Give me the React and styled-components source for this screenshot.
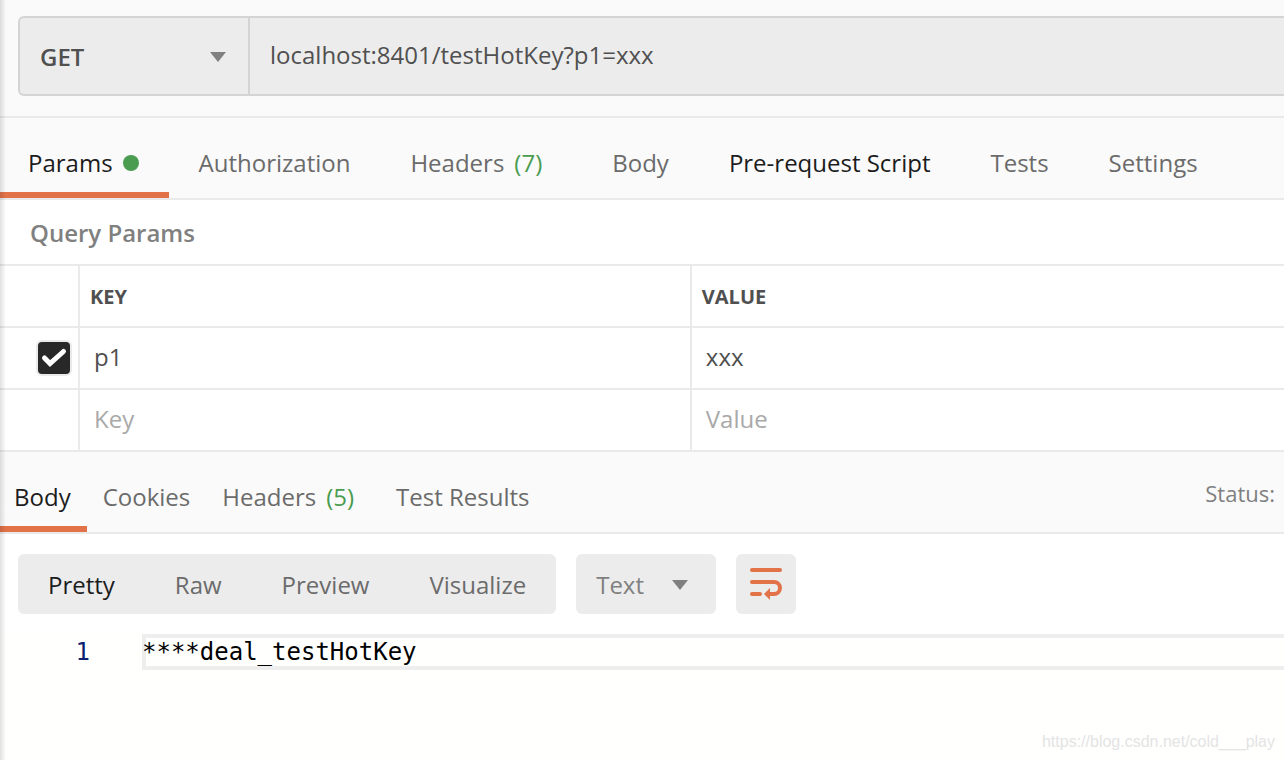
import React, { useState } from 'react';
import styled, { createGlobalStyle } from 'styled-components';

const requestTabs = [
  { name: 'Params', dot: true },
  { name: 'Authorization' },
  { name: 'Headers', count: 7 },
  { name: 'Body' },
  { name: 'Pre-request Script', dark: true },
  { name: 'Tests' },
  { name: 'Settings' },
];

const responseTabs = [
  { name: 'Body' },
  { name: 'Cookies' },
  { name: 'Headers', count: 5 },
  { name: 'Test Results' },
];

const views = ['Pretty', 'Raw', 'Preview', 'Visualize'];

const Caret = () => (
  <CaretIcon width="16" height="10" viewBox="0 0 16 10" aria-hidden="true">
    <path d="M0 0h16L8 10z" fill="#808080" />
  </CaretIcon>
);

const WrapIcon = () => (
  <svg width="32" height="32" viewBox="0 0 32 32" fill="none" aria-hidden="true">
    <g stroke="#e27349" strokeWidth="4" strokeLinecap="round">
      <path d="M2 2h28" />
      <path d="M2 14h22a6 6 0 0 1 0 12h-5" />
      <path d="M2 26h8" />
    </g>
    <path d="M14 26l6-6v12z" fill="#e27349" />
  </svg>
);

const App = () => {
  const [method, setMethod] = useState('GET');
  const [url, setUrl] = useState('localhost:8401/testHotKey?p1=xxx');
  const [requestTab, setRequestTab] = useState('Params');
  const [responseTab, setResponseTab] = useState('Body');
  const [view, setView] = useState('Pretty');
  const [format, setFormat] = useState('Text');
  const [enabled, setEnabled] = useState(true);
  const [paramKey, setParamKey] = useState('p1');
  const [paramValue, setParamValue] = useState('xxx');

  return (
    <>
      <GlobalStyle />
      <Page>
        <RequestBar>
          <UrlGroup>
            <MethodBox>
              <MethodSelect
                aria-label="Method"
                value={method}
                onChange={(event) => setMethod(event.target.value)}
              >
                <option>GET</option>
                <option>POST</option>
                <option>PUT</option>
                <option>DELETE</option>
              </MethodSelect>
              <Caret />
            </MethodBox>
            <UrlInput
              type="text"
              aria-label="Request URL"
              value={url}
              onChange={(event) => setUrl(event.target.value)}
            />
          </UrlGroup>
        </RequestBar>

        <RequestTabs>
          {requestTabs.map((tab) => (
            <RequestTab
              key={tab.name}
              type="button"
              $active={tab.name === requestTab}
              $dark={tab.dark}
              $wide={Boolean(tab.count)}
              onClick={() => setRequestTab(tab.name)}
            >
              {tab.name}
              {tab.dot && <Dot />}
              {tab.count && <Count>({tab.count})</Count>}
            </RequestTab>
          ))}
        </RequestTabs>

        <SectionTitle>Query Params</SectionTitle>
        <ParamsTable>
          <colgroup>
            <CheckCol />
            <KeyCol />
            <col />
          </colgroup>
          <thead>
            <tr>
              <HeadCell aria-label="Enabled" />
              <HeadCell scope="col">KEY</HeadCell>
              <HeadCell scope="col">VALUE</HeadCell>
            </tr>
          </thead>
          <tbody>
            <tr>
              <Cell>
                <CheckBox
                  type="checkbox"
                  aria-label="Enable p1"
                  checked={enabled}
                  onChange={(event) => setEnabled(event.target.checked)}
                />
              </Cell>
              <Cell>
                <CellInput
                  type="text"
                  aria-label="Key"
                  value={paramKey}
                  onChange={(event) => setParamKey(event.target.value)}
                />
              </Cell>
              <Cell>
                <CellInput
                  type="text"
                  aria-label="Value"
                  value={paramValue}
                  onChange={(event) => setParamValue(event.target.value)}
                />
              </Cell>
            </tr>
            <tr>
              <Cell />
              <Cell>
                <CellInput type="text" aria-label="New key" placeholder="Key" />
              </Cell>
              <Cell>
                <CellInput type="text" aria-label="New value" placeholder="Value" />
              </Cell>
            </tr>
          </tbody>
        </ParamsTable>

        <ResponseBar>
          <ResponseTabs>
            {responseTabs.map((tab) => (
              <ResponseTab
                key={tab.name}
                type="button"
                $active={tab.name === responseTab}
                $wide={Boolean(tab.count)}
                onClick={() => setResponseTab(tab.name)}
              >
                {tab.name}
                {tab.count && <Count>({tab.count})</Count>}
              </ResponseTab>
            ))}
          </ResponseTabs>
          <Status>Status:</Status>
        </ResponseBar>

        <Toolbar>
          <ViewGroup>
            {views.map((name) => (
              <ViewButton
                key={name}
                type="button"
                $active={name === view}
                onClick={() => setView(name)}
              >
                {name}
              </ViewButton>
            ))}
          </ViewGroup>
          <FormatBox>
            <FormatSelect
              aria-label="Format"
              value={format}
              onChange={(event) => setFormat(event.target.value)}
            >
              <option>Text</option>
              <option>JSON</option>
              <option>HTML</option>
            </FormatSelect>
            <Caret />
          </FormatBox>
          <WrapButton type="button" aria-label="Wrap lines">
            <WrapIcon />
          </WrapButton>
        </Toolbar>

        <Editor>
          <LineNumber>1</LineNumber>
          <CodeLine>****deal_testHotKey</CodeLine>
        </Editor>

        <Watermark>https://blog.csdn.net/cold___play</Watermark>
        <EdgeShadow />
      </Page>
    </>
  );
};

const GlobalStyle = createGlobalStyle`
  *, *::before, *::after {
    box-sizing: border-box;
  }

  body {
    margin: 0;
    background: #fff;
  }

  body, button, input, select {
    font-family: "Open Sans", "Noto Sans", sans-serif;
    font-size: 24px;
    line-height: 32px;
  }

  button, input, select {
    margin: 0;
    padding: 0;
    border: 0;
    border-radius: 0;
    background: none;
    outline: none;
  }
`;

const Page = styled.div`
  position: relative;
  display: flex;
  flex-direction: column;
  min-height: 100vh;
  overflow: hidden;
`;

const RequestBar = styled.div`
  padding: 16px 0 20px 18px;
  background: #fafafa;
  border-bottom: 2px solid #eaeaea;
`;

const UrlGroup = styled.div`
  display: flex;
  height: 80px;
  background: #ececec;
  border: 2px solid #d4d4d4;
  border-right: 0;
  border-radius: 6px 0 0 6px;
`;

const SelectBox = styled.div`
  display: grid;
  align-items: center;
  flex: none;

  > * {
    grid-area: 1 / 1;
  }
`;

const MethodBox = styled(SelectBox)`
  width: 230px;
  padding-right: 22px;
  border-right: 2px solid #d4d4d4;
`;

const MethodSelect = styled.select`
  appearance: none;
  height: 76px;
  padding: 2px 0 0 20px;
  color: #505050;
  font-weight: 600;
`;

const CaretIcon = styled.svg`
  justify-self: end;
  margin-top: 2px;
  pointer-events: none;
`;

const UrlInput = styled.input`
  flex: 1;
  min-width: 0;
  padding: 0 20px 2px;
  color: #505050;
`;

const RequestTabs = styled.nav`
  display: flex;
  background: #fafafa;
  border-bottom: 2px solid #eaeaea;
`;

const Tab = styled.button`
  display: flex;
  align-items: center;
  flex: none;
  height: 80px;
  padding-top: 16px;
  border-bottom: 6px solid ${(props) => (props.$active ? '#e27349' : 'transparent')};
  color: ${(props) => (props.$active || props.$dark ? '#1c1c1c' : '#6b6b6b')};
  white-space: nowrap;
`;

const RequestTab = styled(Tab)`
  padding-left: 30px;
  padding-right: ${(props) => (props.$wide ? 40 : 30)}px;

  &:first-child {
    padding-left: 28px;
  }
`;

const ResponseTab = styled(Tab)`
  padding-left: 16px;
  padding-right: ${(props) => (props.$wide ? 26 : 16)}px;

  &:first-child {
    padding-left: 14px;
  }
`;

const Dot = styled.span`
  width: 16px;
  height: 16px;
  margin-left: 10px;
  border-radius: 50%;
  background: #4a9c50;
`;

const Count = styled.span`
  margin-left: 10px;
  color: #4a9c50;
`;

const SectionTitle = styled.h2`
  margin: 0;
  padding: 17px 30px 15px;
  color: #808080;
  font-size: 24px;
  font-weight: 600;
`;

const ParamsTable = styled.table`
  width: 100%;
  table-layout: fixed;
  border-collapse: separate;
  border-spacing: 0;
  border-bottom: 2px solid #eaeaea;
`;

const CheckCol = styled.col`
  width: 80px;
`;

const KeyCol = styled.col`
  width: 47.65%;
`;

const HeadCell = styled.th`
  height: 62px;
  padding: 2px 10px 0;
  border-top: 2px solid #eaeaea;
  border-right: 2px solid #eaeaea;
  color: #505050;
  font-size: 20px;
  font-weight: 700;
  text-align: left;

  &:last-child {
    border-right: 0;
  }
`;

const Cell = styled.td`
  height: 62px;
  padding: 0;
  border-top: 2px solid #eaeaea;
  border-right: 2px solid #eaeaea;

  &:last-child {
    border-right: 0;
  }
`;

const CellInput = styled.input`
  display: block;
  width: 100%;
  height: 60px;
  padding: 0 14px 4px;
  color: #505050;

  &::placeholder {
    color: #a9a9a9;
    opacity: 1;
  }
`;

const CheckBox = styled.input`
  appearance: none;
  display: block;
  width: 36px;
  height: 36px;
  margin: 0 6px 0 auto;
  border: 2px solid #eaeaea;
  border-radius: 6px;

  &:checked {
    background: #282828
      url("data:image/svg+xml,%3Csvg xmlns='http://www.w3.org/2000/svg' viewBox='0 0 32 32'%3E%3Cpath d='M6.5 16l5.5 5.5L25.5 9.5' fill='none' stroke='white' stroke-width='5' stroke-linecap='round'/%3E%3C/svg%3E")
      center / 32px 32px no-repeat;
  }
`;

const ResponseBar = styled.div`
  display: flex;
  justify-content: space-between;
  background: #fafafa;
  border-bottom: 2px solid #eaeaea;
`;

const ResponseTabs = styled.nav`
  display: flex;
`;

const Status = styled.span`
  padding: 25px 9px 0 0;
  color: #808080;
  font-size: 22px;
`;

const Toolbar = styled.div`
  display: flex;
  gap: 20px;
  padding: 20px 18px;
`;

const ViewGroup = styled.div`
  display: flex;
  height: 60px;
  border-radius: 6px;
  background: #ececec;
`;

const ViewButton = styled.button`
  padding: 2px 30px 0;
  color: ${(props) => (props.$active ? '#1c1c1c' : '#6b6b6b')};
`;

const FormatBox = styled(SelectBox)`
  width: 140px;
  padding-right: 28px;
  border-radius: 6px;
  background: #ececec;
`;

const FormatSelect = styled.select`
  appearance: none;
  height: 60px;
  padding: 2px 0 0 20px;
  color: #808080;
`;

const WrapButton = styled.button`
  display: grid;
  place-items: center;
  width: 60px;
  height: 60px;
  border-radius: 6px;
  background: #ececec;
`;

const Editor = styled.div`
  display: flex;
  align-items: flex-start;
  flex: 1;
  background: #fffffe;
  font-family: "DejaVu Sans Mono", monospace;
  line-height: 28px;
`;

const LineNumber = styled.span`
  width: 142px;
  padding: 4px 52px 0 0;
  color: #0b216f;
  text-align: right;
`;

const CodeLine = styled.code`
  flex: 1;
  height: 36px;
  border: 4px solid #eee;
  border-right: 0;
  color: #000;
  font-family: inherit;
  text-indent: -4px;
`;

const Watermark = styled.span`
  position: absolute;
  right: 9px;
  bottom: 8px;
  color: #e4e4e4;
  font-family: "Liberation Sans", Arial, sans-serif;
  font-size: 16px;
  line-height: 20px;
`;

const EdgeShadow = styled.div`
  position: absolute;
  top: 0;
  bottom: 0;
  left: 0;
  width: 6px;
  background: linear-gradient(to right, rgba(0, 0, 0, 0.12), rgba(0, 0, 0, 0));
  pointer-events: none;
`;

export default App;
